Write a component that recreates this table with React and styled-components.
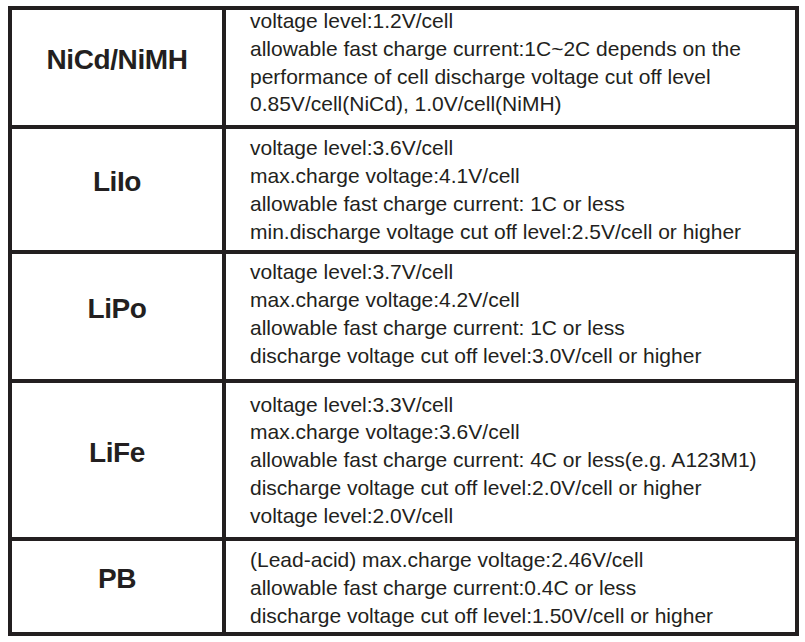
import React from "react";
import styled, { createGlobalStyle } from "styled-components";

const Global = createGlobalStyle`
  html, body { margin: 0; padding: 0; background: #ffffff; }
  body { font-family: "Liberation Sans", Arial, sans-serif; color: #231f20; }
`;

const Page = styled.div`
  padding: 6px 0 0 8px;
`;

const Table = styled.div`
  width: 791px;
  display: grid;
  grid-template-columns: 210px 569px;
  gap: 4px;
  padding: 4px;
  box-sizing: border-box;
  background: #231f20;
`;

const LabelCell = styled.div`
  background: #ffffff;
  height: ${(p) => p.$h}px;
  display: flex;
  align-items: center;
  justify-content: center;
  padding-bottom: 15px;
  box-sizing: border-box;
  font-family: "Liberation Sans", Arial, sans-serif;
  font-weight: 700;
  font-size: 28px;
  line-height: 1;
  letter-spacing: -0.4px;
  color: #231f20;
`;

const TextCell = styled.div`
  background: #ffffff;
  height: ${(p) => p.$h}px;
  display: flex;
  flex-direction: column;
  justify-content: center;
  padding-left: 24px;
  padding-bottom: ${(p) => Math.max(0, p.$shift)}px;
  padding-top: ${(p) => Math.max(0, -p.$shift)}px;
  box-sizing: border-box;
  font-size: 21px;
  line-height: 27.8px;
  color: #231f20;
`;

const Line = styled.div`
  white-space: nowrap;
`;

const rows = [
  {
    label: "NiCd/NiMH",
    h: 115,
    shift: 10,
    lines: [
      "voltage level:1.2V/cell",
      "allowable fast charge current:1C~2C depends on the",
      "performance of cell discharge voltage cut off level",
      "0.85V/cell(NiCd), 1.0V/cell(NiMH)",
    ],
  },
  {
    label: "LiIo",
    h: 121,
    shift: -1,
    lines: [
      "voltage level:3.6V/cell",
      "max.charge voltage:4.1V/cell",
      "allowable fast charge current: 1C or less",
      "min.discharge voltage cut off level:2.5V/cell or higher",
    ],
  },
  {
    label: "LiPo",
    h: 125,
    shift: 5,
    lines: [
      "voltage level:3.7V/cell",
      "max.charge voltage:4.2V/cell",
      "allowable fast charge current: 1C or less",
      "discharge voltage cut off level:3.0V/cell or higher",
    ],
  },
  {
    label: "LiFe",
    h: 154,
    shift: 0,
    lines: [
      "voltage level:3.3V/cell",
      "max.charge voltage:3.6V/cell",
      "allowable fast charge current: 4C or less(e.g. A123M1)",
      "discharge voltage cut off level:2.0V/cell or higher",
      "voltage level:2.0V/cell",
    ],
  },
  {
    label: "PB",
    h: 91,
    shift: -3,
    lines: [
      "(Lead-acid) max.charge voltage:2.46V/cell",
      "allowable fast charge current:0.4C or less",
      "discharge voltage cut off level:1.50V/cell or higher",
    ],
  },
];

export default function App() {
  return (
    <>
      <Global />
      <Page>
        <Table>
          {rows.map((r) => (
            <React.Fragment key={r.label}>
              <LabelCell $h={r.h}>{r.label}</LabelCell>
              <TextCell $h={r.h} $shift={r.shift}>
                {r.lines.map((l, i) => (
                  <Line key={i}>{l}</Line>
                ))}
              </TextCell>
            </React.Fragment>
          ))}
        </Table>
      </Page>
    </>
  );
}
